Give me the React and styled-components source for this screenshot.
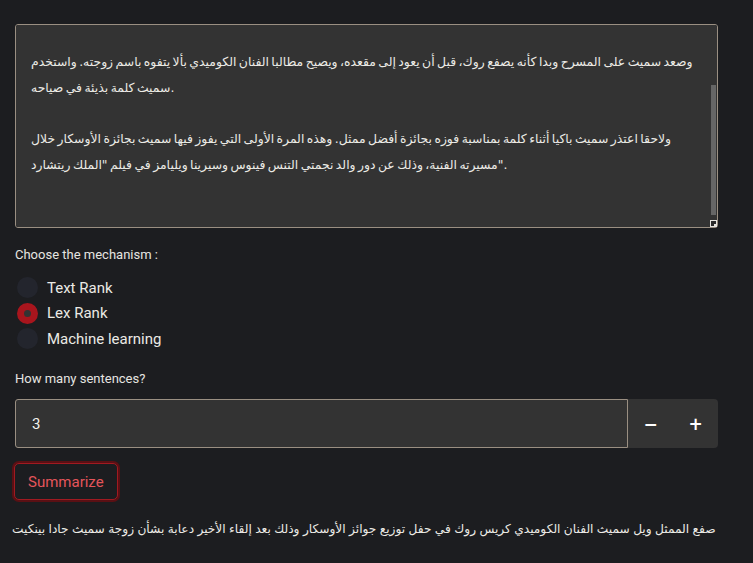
import { useEffect, useRef, useState } from 'react';
import styled, { createGlobalStyle, css } from 'styled-components';

const GlobalStyle = createGlobalStyle`
  html, body {
    margin: 0;
    padding: 0;
    background: #1c1d20;
  }
  body {
    font-family: Roboto, 'Noto Sans', sans-serif;
    color: #ebeae5;
  }
`;

const Page = styled.main`
  display: flex;
  flex-direction: column;
  width: 703px;
  padding: 24px 0 0 15px;
`;

const ArticleWrap = styled.div`
  position: relative;
  height: 204px;
`;

const ArticleBox = styled.textarea`
  box-sizing: border-box;
  display: block;
  width: 703px;
  height: 204px;
  margin: 0;
  padding: 16px 16px 24px 15px;
  background: #333333;
  color: #ecebe6;
  border: 1.5px solid #9a8f82;
  border-radius: 3px;
  font-family: 'DejaVu Sans', sans-serif;
  font-size: 12.4px;
  word-spacing: -1.5px;
  line-height: 25.6px;
  resize: none;
  outline: none;

  &::-webkit-scrollbar {
    width: 0;
  }
`;

const ScrollThumb = styled.span`
  position: absolute;
  right: 2px;
  width: 5px;
  background: #666666;
  pointer-events: none;
`;

const ResizeGrip = styled.span`
  position: absolute;
  right: 1px;
  bottom: 1px;
  width: 5px;
  height: 5px;
  border: 1px solid #e6e5e0;
  background: #2a2a2a;
  pointer-events: none;

  &::after {
    content: '';
    position: absolute;
    right: 0;
    bottom: 0;
    width: 2px;
    height: 2px;
    background: #e6e5e0;
  }
`;

const Label = styled.div`
  font-size: 13px;
  color: #e6e5e0;
  margin: ${({ $top }) => $top}px 0 0;
  line-height: 18px;
`;

const RadioGroup = styled.div`
  display: flex;
  flex-direction: column;
  gap: 4.5px;
  margin-top: 13px;
`;

const RadioRow = styled.label`
  display: flex;
  align-items: center;
  gap: 9px;
  height: 21px;
  cursor: pointer;
  font-size: 15px;
  color: #ebeae5;
`;

const Dot = styled.span`
  box-sizing: border-box;
  display: block;
  width: 21px;
  height: 21px;
  margin-left: 2px;
  border-radius: 50%;
  background: #23252d;

  ${({ $checked }) =>
    $checked &&
    css`
      background: #333333;
      border: 7px solid #a8151d;
    `};
`;

const NumberRow = styled.div`
  display: flex;
  height: 49px;
  margin-top: 11px;
`;

const NumberInput = styled.input`
  box-sizing: border-box;
  flex: 1;
  height: 49px;
  margin: 0;
  padding: 0 16px;
  background: #333333;
  color: #f2f1ec;
  border: 1.5px solid #9a8f82;
  border-radius: 3px 0 0 3px;
  font-family: Roboto, sans-serif;
  font-size: 15px;
  outline: none;
`;

const StepButtons = styled.div`
  display: flex;
  width: 90px;
  background: #333333;
  border-radius: 0 4px 4px 0;
`;

const StepButton = styled.button`
  flex: 1;
  border: none;
  background: transparent;
  color: #ffffff;
  font-family: 'DejaVu Sans', sans-serif;
  font-size: 17px;
  font-weight: 700;
  padding: 0;
  cursor: pointer;
`;

const SummarizeButton = styled.button`
  align-self: flex-start;
  margin: 15px 0 0 -1px;
  padding: 0 13px;
  height: 37px;
  background: #1c1d20;
  color: #e4555b;
  border: 1px solid #a01a21;
  border-radius: 5px;
  box-shadow: 0 0 0 2px #5a1014;
  font-family: Roboto, sans-serif;
  font-size: 15px;
  cursor: pointer;
`;

const Summary = styled.p`
  margin: 19px 0 0 -3px;
  font-family: 'DejaVu Sans', sans-serif;
  font-size: 12.2px;
  word-spacing: -0.5px;
  line-height: 20px;
  color: #ecebe6;
  white-space: nowrap;
`;

const article = [
  'صفع الممثل ويل سميث الفنان الكوميدي كريس روك في حفل توزيع جوائز الأوسكار وذلك بعد إلقاء الأخير دعابة بشأن زوجة سميث.',
  '',
  'وكان روك قد قال مازحا إن جادا بينكيت سميث يجب أن تشارك في الجزء الثاني من فيلم "جي آي جين".',
  '',
  'وصعد سميث على المسرح وبدا كأنه يصفع روك، قبل أن يعود إلى مقعده، ويصيح مطالبا الفنان الكوميدي بألا يتفوه باسم زوجته. واستخدم سميث كلمة بذيئة في صياحه.',
  '',
  'ولاحقا اعتذر سميث باكيا أثناء كلمة بمناسبة فوزه بجائزة أفضل ممثل. وهذه المرة الأولى التي يفوز فيها سميث بجائزة الأوسكار خلال مسيرته الفنية، وذلك عن دور والد نجمتي التنس فينوس وسيرينا ويليامز في فيلم "الملك ريتشارد".',
  '',
].join('\n');

const mechanisms = ['Text Rank', 'Lex Rank', 'Machine learning'];

const App = () => {
  const boxRef = useRef(null);
  const [text, setText] = useState(article);
  const [method, setMethod] = useState('Lex Rank');
  const [count, setCount] = useState(3);
  const [thumb, setThumb] = useState({ top: 0, height: 0 });

  const updateThumb = () => {
    const el = boxRef.current;
    if (!el) return;
    const track = el.clientHeight - 12;
    const height = Math.max(20, (el.clientHeight / el.scrollHeight) * track);
    const max = el.scrollHeight - el.clientHeight;
    const top = max > 0 ? (el.scrollTop / max) * (track - height) : 0;
    setThumb({ top: top + 1, height: el.scrollHeight > el.clientHeight ? height : 0 });
  };

  useEffect(() => {
    if (boxRef.current) boxRef.current.scrollTop = boxRef.current.scrollHeight;
    updateThumb();
  }, []);

  return (
    <>
      <GlobalStyle />
      <Page>
        <ArticleWrap>
          <ArticleBox
            ref={boxRef}
            value={text}
            onScroll={updateThumb}
            onChange={(e) => setText(e.target.value)}
          />
          <ScrollThumb style={{ top: thumb.top, height: thumb.height }} />
          <ResizeGrip />
        </ArticleWrap>

        <Label $top={18}>Choose the mechanism :</Label>
        <RadioGroup>
          {mechanisms.map((m) => (
            <RadioRow key={m} onClick={() => setMethod(m)}>
              <Dot $checked={method === m} />
              {m}
            </RadioRow>
          ))}
        </RadioGroup>

        <Label $top={21}>How many sentences?</Label>
        <NumberRow>
          <NumberInput
            type="text"
            value={count}
            onChange={(e) => setCount(e.target.value)}
          />
          <StepButtons>
            <StepButton onClick={() => setCount((c) => Number(c) - 1)}>−</StepButton>
            <StepButton onClick={() => setCount((c) => Number(c) + 1)}>+</StepButton>
          </StepButtons>
        </NumberRow>

        <SummarizeButton>Summarize</SummarizeButton>

        <Summary>
          صفع الممثل ويل سميث الفنان الكوميدي كريس روك في حفل توزيع جوائز الأوسكار وذلك بعد إلقاء الأخير دعابة بشأن زوجة سميث جادا بينكيت
        </Summary>
      </Page>
    </>
  );
};

export default App;
